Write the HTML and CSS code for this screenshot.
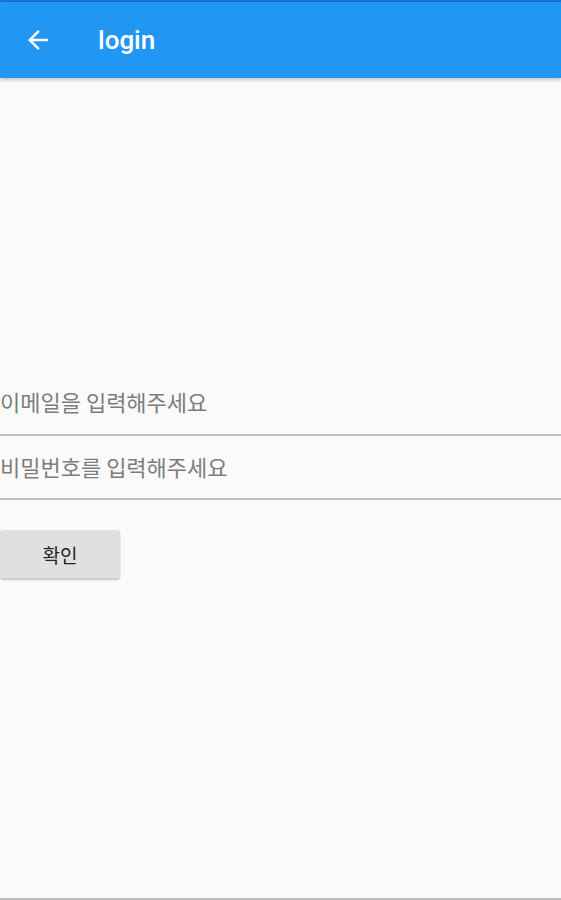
FILE: index.html
```html
<!DOCTYPE html>
<html>
<head>
<meta charset="utf-8">
<link rel="stylesheet" href="styles.css">
</head>
<body>
<div class="status"></div>
<header class="appbar">
  <span class="back">
    <svg width="24" height="24" viewBox="0 0 24 24"><path d="M20 11H7.83l5.59-5.59L12 4l-8 8 8 8 1.41-1.41L7.83 13H20v-2z" fill="#fff"/></svg>
  </span>
  <span class="title">login</span>
</header>
<main class="content">
  <div class="field"><span class="ph">이메일을 입력해주세요</span></div>
  <div class="field"><span class="ph">비밀번호를 입력해주세요</span></div>
  <div class="btnrow"><button class="btn">확인</button></div>
</main>
<div class="bottom"></div>
</body>
</html>
```
FILE: styles.css
```css
html, body {
  margin: 0;
  padding: 0;
  height: 900px;
  overflow: hidden;
  background: #fafafa;
  font-family: Roboto, "Noto Sans CJK KR", sans-serif;
}
body {
  display: flex;
  flex-direction: column;
}
.status {
  height: 2px;
  background: #1976d2;
}
.appbar {
  height: 76px;
  background: #2196f3;
  display: flex;
  align-items: center;
  box-shadow: 0 2px 4px rgba(0,0,0,0.22);
  position: relative;
  z-index: 1;
}
.back {
  width: 30px;
  height: 30px;
  margin-left: 23px;
  display: flex;
  align-items: center;
  justify-content: center;
}
.back svg {
  width: 30px;
  height: 30px;
}
.title {
  margin-left: 45px;
  color: #fff;
  font-size: 26px;
  font-weight: 500;
}
.content {
  flex: 1;
  padding-top: 293px;
  display: flex;
  flex-direction: column;
}
.field {
  height: 63px;
  border-bottom: 2px solid #bdbdbd;
  display: flex;
  align-items: center;
}
.field + .field { height: 62px; }
.ph {
  color: #7d7d7d;
  font-size: 22px;
  font-family: "Noto Sans CJK KR", sans-serif;
  margin-top: -3px;
}
.btnrow {
  padding-top: 30px;
}
.btn {
  width: 120px;
  height: 48px;
  border: none;
  border-radius: 3px;
  background: #e0e0e0;
  box-shadow: 0 2px 2px rgba(0,0,0,0.2);
  font-family: "Noto Sans CJK KR", sans-serif;
  font-size: 19px;
  color: #222;
  padding: 0;
}
.bottom {
  height: 2px;
  background: #bdbdbd;
}
```
